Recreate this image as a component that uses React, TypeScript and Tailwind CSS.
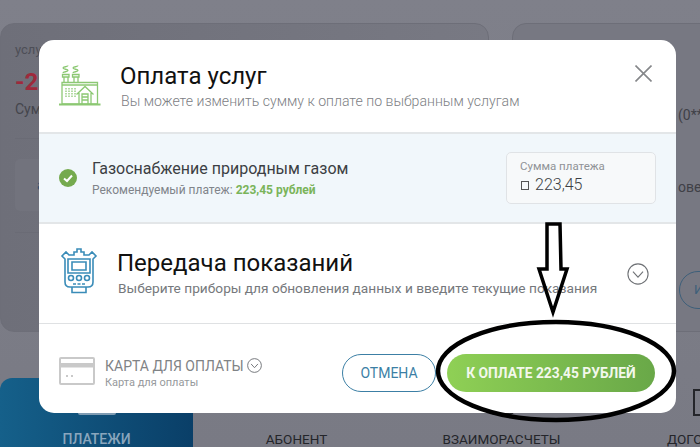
import React from 'react';

const FactoryIcon = () => (
  <svg className="shrink-0" width="42" height="42" viewBox="0 0 42 42" fill="none" stroke="#8cc873" strokeWidth="1.300">
    <path d="M4 8c0-1.500 5-1 5-2.500S4 4.500 4 3s5-1 5-2.500M14 8c0-1.500 5-1 5-2.500S14 4.500 14 3s5-1 5-2.500" />
    <path d="M3.500 9.500h6.500v2.500H3.500zM13.500 9.500H20v2.500h-6.500zM5 12v5M9 12v5M15 12v5M19 12v5" />
    <path d="M3 17.500h35.500V39H3z" />
    <path d="M3 20h35.500" />
    <path d="M7 23v9M10 23v9M13 23v9M16 23v9" strokeDasharray="1.500 1" />
    <path d="M17.500 29.500L26 21.500l8.500 8M20 28v11M32 28v11M23 39v-10h6v10M23 32h6M23 35h6" />
    <path d="M0 39.500h41.500" strokeWidth="2" />
  </svg>
);

const MeterIcon = () => (
  <svg className="shrink-0" width="40" height="48" viewBox="0 0 40 48" fill="none" stroke="#3a8cb8" strokeWidth="1.600">
    <path d="M10 7h5V4h3V1h4v3h3v3h5l3-3 4 4-3 3v23c0 3-2 5-5 5H11c-3 0-5-2-5-5V11L3 8l4-4z" />
    <path d="M9 11h22v14H9z" />
    <path d="M13 14h14v8H13z" />
    <circle cx="12" cy="30" r="2.500" />
    <circle cx="20" cy="30" r="2.500" />
    <circle cx="28" cy="30" r="2.500" />
    <path d="M14 36h3M18.500 36h3M23 36h3" />
    <path d="M13 39v5.500h14V39" />
  </svg>
);

const CardIcon = () => (
  <svg className="shrink-0 -mt-[5px]" width="36" height="28" viewBox="0 0 36 28" fill="none">
    <rect x="1" y="1" width="34" height="26" rx="1" stroke="#c9c9c9" strokeWidth="2" />
    <rect x="1" y="6" width="34" height="4.500" fill="#c9c9c9" />
    <path d="M7 19h2M12 19h2" stroke="#c9c9c9" strokeWidth="2" />
  </svg>
);

const CheckBadge = () => (
  <svg className="shrink-0" width="18" height="18" viewBox="0 0 18 18">
    <circle cx="9" cy="9" r="9" fill="#75aa4e" />
    <path d="M5 9.500l3 2.500 5-5.500" fill="none" stroke="#fff" strokeWidth="2" />
  </svg>
);

const Chevron = ({ size }: { size: number }) => (
  <svg width={size} height={size} viewBox="0 0 24 24" fill="none" stroke="#6f7276" strokeWidth={size > 16 ? 1.2 : 1.500}>
    <circle cx="12" cy="12" r="11" />
    <path d="M6.500 9.500L12 15.500l5.500-6" />
  </svg>
);

export default function App() {
  return (
    <div className="relative w-[700px] h-[447px] overflow-hidden bg-gradient-to-b from-[#7f808a] to-[#797a84] font-['Roboto',sans-serif]">
      {/* dimmed page behind the modal */}
      <div className="flex gap-[23px] pt-[23px]">
        <div className="w-[489px] h-[309px] shrink-0 rounded-[14px] border border-[#6d6e78] bg-gradient-to-r from-[#6e6f79] to-[#787983] pl-[14px] pt-[18px]">
          <p className="text-[13px] leading-4 text-[#4d4e56]">услуги</p>
          <p className="mt-[10px] text-[24px] leading-7 font-bold text-[#9e2a3c]">-223</p>
          <p className="mt-[5px] text-[14px] leading-4 text-[#44454c]">Сумма</p>
          <div className="mt-[21px] mr-[14px] h-px bg-[#6a6b75]" />
          <div className="mt-[20px] mr-[14px] h-[52px] rounded-[5px] bg-[#72737d] pl-[22px] pt-[18px] text-[14px] leading-4 text-[#2d4f6f]">а</div>
          <div className="mt-[21px] mr-[14px] h-px bg-[#6a6b75]" />
        </div>
        <div className="flex-1 h-[309px] rounded-l-[14px] border border-[#6d6e78] bg-[#777882] pt-[83px] pl-[165px] whitespace-nowrap">
          <p className="text-[14px] leading-4 text-[#3f4047]">(0**</p>
          <p className="mt-[56px] text-[14px] leading-4 text-[#3f4047]">ове</p>
          <div className="mt-[76px] ml-[1px] w-[60px] h-[38px] rounded-full border border-[#3d5f7a] pl-[14px] pt-[10px] text-[13px] leading-4 text-[#3d5f7a]">И</div>
        </div>
      </div>
      <div className="mt-[46px] flex h-[69px] whitespace-nowrap">
        <div className="w-[193px] shrink-0 rounded-tl-[12px] bg-gradient-to-r from-[#15608a] to-[#0a3f68] flex flex-col items-center">
          <div className="h-[44px] flex items-end">
            <div className="w-[38px] h-[24px] rounded-[2px] border-2 border-[#7f9cb3]" />
          </div>
          <span className="mt-[16px] text-[14px] leading-4 font-medium text-[#8aa6bd]">ПЛАТЕЖИ</span>
        </div>
        <div className="w-[207px] shrink-0 flex flex-col items-center">
          <div className="h-[44px] flex items-end text-[15px] leading-4 text-[#24252a]">EX</div>
          <span className="mt-[16px] text-[13.500px] leading-4 text-[#24252a]">АБОНЕНТ</span>
        </div>
        <div className="w-[203px] shrink-0 flex flex-col items-center">
          <div className="h-[44px] flex items-end">
            <div className="w-[26px] h-[6px] rounded-b-full border-2 border-t-0 border-[#24252a]" />
          </div>
          <span className="mt-[16px] text-[13.500px] leading-4 text-[#24252a]">ВЗАИМОРАСЧЕТЫ</span>
        </div>
        <div className="flex-1 flex flex-col pl-[64px]">
          <div className="h-[45px] pl-[26px] flex items-end">
            <div className="w-[20px] h-[27px] border-2 border-[#24252a]" />
          </div>
          <span className="mt-[15px] text-[13.500px] leading-4 text-[#24252a]">ДОГО</span>
        </div>
      </div>

      {/* modal */}
      <div className="absolute left-[39px] top-[40px] w-[637px] h-[373px] bg-white rounded-[15px] flex flex-col overflow-hidden">
        <div className="h-[94px] shrink-0 flex border-b-2 border-[#e3e6e8] pl-[20px] pr-[24px] pt-[25px]">
          <FactoryIcon />
          <div className="ml-[19px] -mt-[11px]">
            <h2 className="text-[24px] leading-[30px] text-[#111] mt-[7px]">Оплата услуг</h2>
            <p className="text-[14.100px] leading-4 text-[#7d8084] mt-[2px] ml-[1px] font-light">Вы можете изменить сумму к оплате по выбранным услугам</p>
          </div>
          <svg className="ml-auto" width="17" height="17" viewBox="0 0 17 17" stroke="#85878a" strokeWidth="1.600">
            <path d="M.500.500l16 16M16.500.500l-16 16" />
          </svg>
        </div>

        <div className="h-[90px] shrink-0 flex items-center bg-[#f1f7fb] border-b-2 border-[#e3e6e8] pl-[20px] pr-[20px]">
          <CheckBadge />
          <div className="ml-[15px]">
            <p className="text-[16px] leading-5 text-[#3c3f44]">Газоснабжение природным газом</p>
            <p className="text-[12px] leading-[14px] text-[#80848a] mt-[4px]">
              Рекомендуемый платеж: <span className="font-bold text-[#7ab45a]">223,45 рублей</span>
            </p>
          </div>
          <div className="ml-auto w-[150px] h-[52px] rounded-[5px] border border-[#e0e3e6] bg-[#f7f9fa] pl-[13px] pt-[6px]">
            <p className="text-[11.500px] leading-[14px] text-[#909397]">Сумма платежа</p>
            <p className="text-[16px] leading-5 text-[#3c3f44] mt-[2px] font-light">
              <span className="inline-block w-[8px] h-[9px] border border-[#555] ml-[1px] mr-[6px]" />223,45
            </p>
          </div>
        </div>

        <div className="h-[100px] shrink-0 flex border-b border-[#dfe1e3] pl-[20px] pr-[27px] pt-[24px]">
          <MeterIcon />
          <div className="ml-[18px]">
            <h2 className="text-[24px] leading-7 text-[#111] mt-[1px]">Передача показаний</h2>
            <p className="text-[13.700px] leading-4 text-[#75787c] mt-[3px] ml-[1px]">Выберите приборы для обновления данных и введите текущие показания</p>
          </div>
          <div className="ml-auto mt-[15px]">
            <Chevron size={22} />
          </div>
        </div>

        <div className="flex-1 flex items-center pl-[20px] pr-[21px] pt-[9px]">
          <CardIcon />
          <div className="ml-[10px]">
            <div className="flex items-center gap-[3px]">
              <span className="text-[14px] leading-4 text-[#808386]">КАРТА ДЛЯ ОПЛАТЫ</span>
              <Chevron size={15} />
            </div>
            <p className="text-[11px] leading-3 text-[#96999c] mt-[3px]">Карта для оплаты</p>
          </div>
          <button className="ml-auto w-[94px] h-[38px] rounded-full border border-[#3c7fa5] text-[14px] text-[#3c7fa5]">ОТМЕНА</button>
          <button className="ml-[11px] w-[208px] h-[38px] rounded-full bg-gradient-to-r from-[#8fd055] to-[#69a848] text-[13.800px] font-bold text-[#f3f8ec]">К ОПЛАТЕ 223,45 РУБЛЕЙ</button>
        </div>
      </div>

      {/* hand-drawn arrow and ellipse on top of the screenshot */}
      <svg className="absolute left-0 top-0" width="700" height="447" viewBox="0 0 700 447" fill="none" stroke="#000">
        <path d="M547 224h13l1 45h6l-14 43-14-43h8z" strokeWidth="3.500" />
        <ellipse cx="556" cy="371" rx="118" ry="49" strokeWidth="4.500" />
      </svg>
    </div>
  );
}
